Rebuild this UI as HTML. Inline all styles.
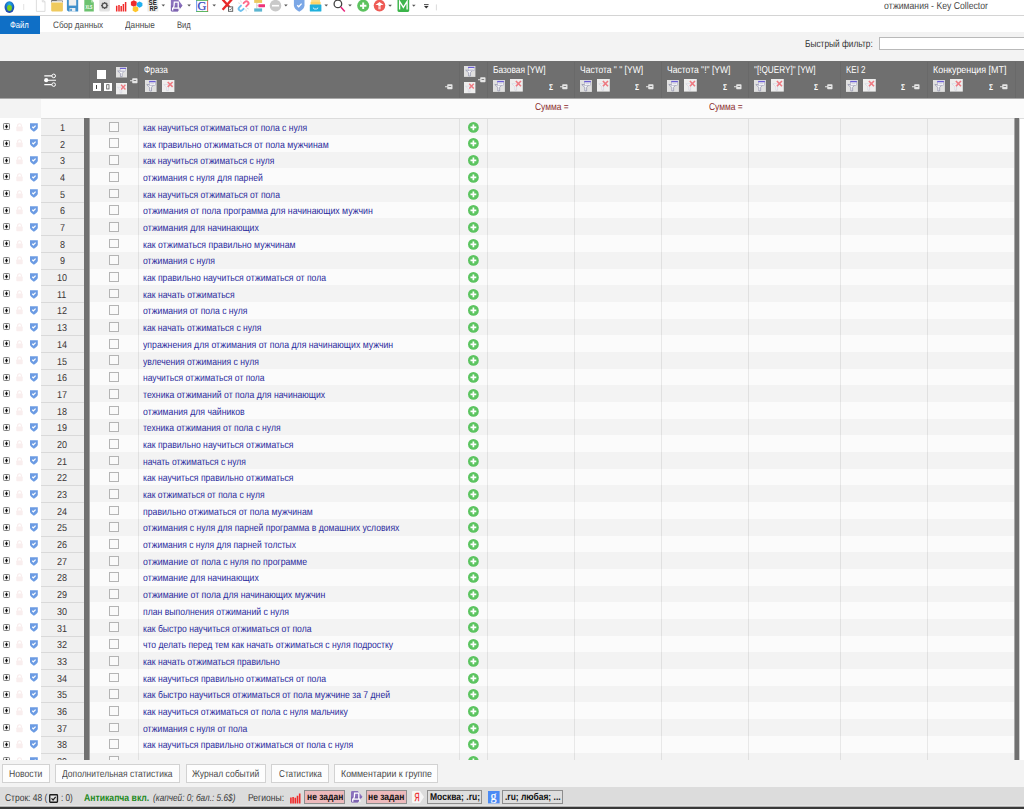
<!DOCTYPE html><html><head><meta charset="utf-8"><title>Key Collector</title><style>
*{box-sizing:border-box;margin:0;padding:0}
html,body{width:1024px;height:809px;overflow:hidden;background:#fff}
body{position:relative;font-family:"Liberation Sans",sans-serif;font-size:10px;color:#333}
.a{position:absolute}
.t{position:absolute;white-space:nowrap;transform-origin:0 50%;text-rendering:geometricPrecision}
svg{position:absolute;overflow:visible}
#title{left:0;top:0;width:1024px;height:15px;background:#fff}
#tline{left:0;top:15px;width:1024px;height:1px;background:#d4d4d4}
#menu{left:0;top:16px;width:1024px;height:16px;background:#fff}
#file{left:0;top:16px;width:40px;height:17.7px;background:#0f6fc6}
#ribbon{left:0;top:32px;width:1024px;height:29.5px;background:#f3f3f3}
#hdr{left:0;top:61px;width:1024px;height:38px;background:#6f6f6f;border-bottom:1px solid #a9a9a9}
#sum{left:0;top:99px;width:1024px;height:19px;background:#fbfbfb}
#suml{left:0;top:99px;width:41px;height:19px;background:#f3f3f3}
#grid{left:0;top:118.3px;width:1024px;height:641.4px;overflow:hidden;background:#fff}
.row{position:absolute;left:89.5px;width:925px;height:16.69px;border-top:1.3px solid transparent}
.num.first{border-top-color:#f0f0f0}
#gtop{left:41px;top:117.7px;width:983px;height:1px;background:#dcdcdc}
.odd{background:#f3f3f3}
.even{background:#fbfbfb}
.num{position:absolute;left:41px;width:43.5px;height:16.69px;background:#f0f0f0;border-top:1.3px solid #d9d9d9}
.cb{position:absolute;left:109.2px;width:9.8px;height:9.8px;border:1px solid #b4b4b4;background:#fafafa}
.vl{position:absolute;width:1px;background:rgba(0,0,0,0.075);top:117.65px;height:642.05px}
.hl{position:absolute;width:1px;background:#696969;top:62px;height:36px}
#bar1{left:84px;top:118px;width:5px;height:641.7px;background:#717171;border-right:1px solid #a4a4a4;box-sizing:content-box}
#bar2{left:1014px;top:118px;width:4px;height:641.7px;background:#717171;border-left:1px solid #a8a8a8;border-right:1px solid #cfcfcf;box-sizing:content-box}
#btnbar{left:0;top:759.8px;width:1024px;height:27.4px;background:#f3f3f3}
.btn{position:absolute;top:764.4px;height:18.2px;border:1px solid #d2d2d2;background:#fdfdfd}
#status{left:0;top:787.2px;width:1024px;height:19.3px;background:#dcdcdc}
#bline{left:0;top:807px;width:1024px;height:2px;background:#383838}
#bline0{left:0;top:805px;width:1024px;height:2px;background:#b2b2b2;border-top:1px solid #e4e4e4}
.pk{position:absolute;top:790.2px;height:13.6px;border:1px solid #8e8e8e}
</style></head><body>
<div id="title" class="a"></div><div id="tline" class="a"></div><div id="menu" class="a"></div><div id="ribbon" class="a"></div><div id="file" class="a"></div>
<div id="hdr" class="a"></div><div id="sum" class="a"></div><div id="suml" class="a"></div>
<svg width="0" height="0" style="position:absolute"><defs>
<g id="exp"><rect x="0.5" y="0.5" width="6" height="6" rx="0.8" fill="#f6f6f6" stroke="#7c7c7c" stroke-width="0.95"/><path d="M3.5 1.3 L4.9 3.5 L3.5 5.7 L2.1 3.5Z" fill="#0c0c0c"/></g>
<g id="lock"><path d="M1.6 3.8 V2.6 A1.9 1.9 0 0 1 5.4 2.6 V3.8" fill="none" stroke="#f8ecec" stroke-width="1.1"/><rect x="0.3" y="3.6" width="6.4" height="4.6" rx="0.6" fill="#f9eeee"/></g>
<g id="shield"><path d="M0 0.2 H7.8 V4.6 Q7.8 6.6 3.9 8.7 Q0 6.6 0 4.6Z" fill="#6b9be3"/><path d="M2.3 3.8 L3.4 4.9 L5.6 2.6" fill="none" stroke="#fff" stroke-width="1.25"/></g>
<g id="gplus"><circle cx="5.4" cy="5.4" r="5.4" fill="#5cc460"/><path d="M5.4 2.5 V8.3 M2.5 5.4 H8.3" stroke="#fff" stroke-width="1.7"/></g>
<g id="slider"><path d="M0.3 1.9 H8 M4 6.2 H12 M0.3 10.6 H8" stroke="#fff" stroke-width="1.1"/><circle cx="9.7" cy="1.9" r="1.8" fill="#6f6f6f" stroke="#fff" stroke-width="1"/><circle cx="2.2" cy="6.2" r="2.1" fill="#fff"/><circle cx="9.7" cy="10.6" r="1.8" fill="#6f6f6f" stroke="#fff" stroke-width="1"/></g>
<g id="f1"><rect x="0" y="0" width="11.8" height="12" fill="#e0e0e0"/><path d="M1.8 4.6 H8.8 L6.6 7.4 V11 H4.8 V7.4Z" fill="#f7f7fa" stroke="#8688a4" stroke-width="0.7"/><rect x="4.5" y="2" width="5.9" height="3.3" fill="#f5f5f9" stroke="#9c9cb4" stroke-width="0.5"/><path d="M5.4 3.7 H9.4" stroke="#a8a8bc" stroke-width="0.5"/><rect x="4.2" y="0.9" width="6.6" height="1.3" fill="#6a5cd6"/></g>
<g id="f2"><rect x="0" y="0" width="12.6" height="12.6" fill="#eeeeee"/><path d="M1.8 4.8 H8.6 L6.5 7.6 V11.2 H4.8 V7.6Z" fill="#f6f6f8" stroke="#d2d2de" stroke-width="0.7"/><path d="M5.8 2 L10.8 7.2 M10.8 2 L5.8 7.2" stroke="#ee7a82" stroke-width="1.6"/></g>
<g id="pin"><path d="M0 2.75 H2.6" stroke="#e6e6e6" stroke-width="1"/><rect x="2.2" y="0.3" width="5.3" height="4.9" rx="0.7" fill="#e6e6e6"/><rect x="3.5" y="2" width="2.7" height="0.9" fill="#7a7a7a"/></g>
<g id="chk"><rect x="0.7" y="0.7" width="7.4" height="7" rx="0.6" fill="#e2e2e2" stroke="#1c1c1c" stroke-width="1.3"/><path d="M2.4 4 L3.9 5.6 L6.4 2.6" fill="none" stroke="#1c1c1c" stroke-width="1.1"/></g>
<g id="bars"><path d="M0.9 10.4 V4.6 M3.1 10.4 V3.9 M5.3 10.4 V4.8 M7.5 10.4 V2.8 M9.7 10.4 V0.4" stroke="#f02a2a" stroke-width="1.6"/></g>
<g id="dico"><path d="M1.3 0 H6.8 L11.4 5.8 L6.8 11.6 H1.3 Q0 11.6 0 10.3 V1.3 Q0 0 1.3 0Z" fill="#8b72bd"/><path d="M0 5.8 H11.4 L6.8 11.6 H1.3 Q0 11.6 0 10.3Z" fill="#7559a8" opacity="0.55"/><path d="M1.75 10.70 V8.21 H8.85 V10.70 M7.82 8.21 V2.15 H3.62 Q3.62 6.56 2.44 8.21" fill="none" stroke="#fff" stroke-width="1.30" stroke-linejoin="miter"/></g>
<g id="yico"><path d="M1 0 H8 L12 6 L8 12 H1 Q0 12 0 11 V1 Q0 0 1 0Z" fill="#f6f6f6"/><text x="2.4" y="10" font-family="Liberation Sans" font-size="10" fill="#ee2a2a" stroke="#ee2a2a" stroke-width="0.3" textLength="5" lengthAdjust="spacingAndGlyphs">Я</text></g>
<g id="gico"><rect x="0" y="0" width="11.6" height="12.4" fill="#4a8af4"/><text x="2.6" y="8.8" font-family="Liberation Serif" font-size="12.5" fill="#fff" stroke="#fff" stroke-width="0.2" textLength="6" lengthAdjust="spacingAndGlyphs">g</text></g>
</defs></svg>

<div id="grid" class="a">
<div class="row odd" style="top:0.00px"></div>
<div class="num first" style="top:0.00px"></div>
<span class="t" style="left:59.60px;top:4.55px;font-size:10.00px;line-height:12px;color:#3a3434;transform:scaleX(0.9000);">1</span>
<div class="cb" style="top:3.50px"></div>
<span class="t" style="left:143.10px;top:4.55px;font-size:10.00px;line-height:12px;color:#2a2a9c;transform:scaleX(0.8563);">как научиться отжиматься от пола с нуля</span>
<svg style="left:2.9px;top:4.90px" width="7" height="7" viewBox="0 0 7 7"><use href="#exp"/></svg>
<svg style="left:15.5px;top:4.50px" width="7" height="8.4" viewBox="0 0 7 8.4"><use href="#lock"/></svg>
<svg style="left:29.6px;top:4.40px" width="7.8" height="8.6" viewBox="0 0 7.8 8.6"><use href="#shield"/></svg>
<svg style="left:468px;top:3.50px" width="10.8" height="10.8" viewBox="0 0 10.8 10.8"><use href="#gplus"/></svg>
<div class="row even" style="top:16.69px"></div>
<div class="num" style="top:16.69px"></div>
<span class="t" style="left:59.60px;top:21.24px;font-size:10.00px;line-height:12px;color:#3a3434;transform:scaleX(0.9000);">2</span>
<div class="cb" style="top:20.19px"></div>
<span class="t" style="left:143.10px;top:21.24px;font-size:10.00px;line-height:12px;color:#2a2a9c;transform:scaleX(0.8741);">как правильно отжиматься от пола мужчинам</span>
<svg style="left:2.9px;top:21.59px" width="7" height="7" viewBox="0 0 7 7"><use href="#exp"/></svg>
<svg style="left:15.5px;top:21.19px" width="7" height="8.4" viewBox="0 0 7 8.4"><use href="#lock"/></svg>
<svg style="left:29.6px;top:21.09px" width="7.8" height="8.6" viewBox="0 0 7.8 8.6"><use href="#shield"/></svg>
<svg style="left:468px;top:20.19px" width="10.8" height="10.8" viewBox="0 0 10.8 10.8"><use href="#gplus"/></svg>
<div class="row odd" style="top:33.38px"></div>
<div class="num" style="top:33.38px"></div>
<span class="t" style="left:59.60px;top:37.93px;font-size:10.00px;line-height:12px;color:#3a3434;transform:scaleX(0.9000);">3</span>
<div class="cb" style="top:36.88px"></div>
<span class="t" style="left:143.10px;top:37.93px;font-size:10.00px;line-height:12px;color:#2a2a9c;transform:scaleX(0.8526);">как научиться отжиматься с нуля</span>
<svg style="left:2.9px;top:38.28px" width="7" height="7" viewBox="0 0 7 7"><use href="#exp"/></svg>
<svg style="left:15.5px;top:37.88px" width="7" height="8.4" viewBox="0 0 7 8.4"><use href="#lock"/></svg>
<svg style="left:29.6px;top:37.78px" width="7.8" height="8.6" viewBox="0 0 7.8 8.6"><use href="#shield"/></svg>
<svg style="left:468px;top:36.88px" width="10.8" height="10.8" viewBox="0 0 10.8 10.8"><use href="#gplus"/></svg>
<div class="row even" style="top:50.07px"></div>
<div class="num" style="top:50.07px"></div>
<span class="t" style="left:59.60px;top:54.62px;font-size:10.00px;line-height:12px;color:#3a3434;transform:scaleX(0.9000);">4</span>
<div class="cb" style="top:53.57px"></div>
<span class="t" style="left:143.10px;top:54.62px;font-size:10.00px;line-height:12px;color:#2a2a9c;transform:scaleX(0.8584);">отжимания с нуля для парней</span>
<svg style="left:2.9px;top:54.97px" width="7" height="7" viewBox="0 0 7 7"><use href="#exp"/></svg>
<svg style="left:15.5px;top:54.57px" width="7" height="8.4" viewBox="0 0 7 8.4"><use href="#lock"/></svg>
<svg style="left:29.6px;top:54.47px" width="7.8" height="8.6" viewBox="0 0 7.8 8.6"><use href="#shield"/></svg>
<svg style="left:468px;top:53.57px" width="10.8" height="10.8" viewBox="0 0 10.8 10.8"><use href="#gplus"/></svg>
<div class="row odd" style="top:66.76px"></div>
<div class="num" style="top:66.76px"></div>
<span class="t" style="left:59.60px;top:71.31px;font-size:10.00px;line-height:12px;color:#3a3434;transform:scaleX(0.9000);">5</span>
<div class="cb" style="top:70.26px"></div>
<span class="t" style="left:143.10px;top:71.31px;font-size:10.00px;line-height:12px;color:#2a2a9c;transform:scaleX(0.8575);">как научиться отжиматься от пола</span>
<svg style="left:2.9px;top:71.66px" width="7" height="7" viewBox="0 0 7 7"><use href="#exp"/></svg>
<svg style="left:15.5px;top:71.26px" width="7" height="8.4" viewBox="0 0 7 8.4"><use href="#lock"/></svg>
<svg style="left:29.6px;top:71.16px" width="7.8" height="8.6" viewBox="0 0 7.8 8.6"><use href="#shield"/></svg>
<svg style="left:468px;top:70.26px" width="10.8" height="10.8" viewBox="0 0 10.8 10.8"><use href="#gplus"/></svg>
<div class="row even" style="top:83.45px"></div>
<div class="num" style="top:83.45px"></div>
<span class="t" style="left:59.60px;top:88.00px;font-size:10.00px;line-height:12px;color:#3a3434;transform:scaleX(0.9000);">6</span>
<div class="cb" style="top:86.95px"></div>
<span class="t" style="left:143.10px;top:88.00px;font-size:10.00px;line-height:12px;color:#2a2a9c;transform:scaleX(0.8771);">отжимания от пола программа для начинающих мужчин</span>
<svg style="left:2.9px;top:88.35px" width="7" height="7" viewBox="0 0 7 7"><use href="#exp"/></svg>
<svg style="left:15.5px;top:87.95px" width="7" height="8.4" viewBox="0 0 7 8.4"><use href="#lock"/></svg>
<svg style="left:29.6px;top:87.85px" width="7.8" height="8.6" viewBox="0 0 7.8 8.6"><use href="#shield"/></svg>
<svg style="left:468px;top:86.95px" width="10.8" height="10.8" viewBox="0 0 10.8 10.8"><use href="#gplus"/></svg>
<div class="row odd" style="top:100.14px"></div>
<div class="num" style="top:100.14px"></div>
<span class="t" style="left:59.60px;top:104.69px;font-size:10.00px;line-height:12px;color:#3a3434;transform:scaleX(0.9000);">7</span>
<div class="cb" style="top:103.64px"></div>
<span class="t" style="left:143.10px;top:104.69px;font-size:10.00px;line-height:12px;color:#2a2a9c;transform:scaleX(0.8694);">отжимания для начинающих</span>
<svg style="left:2.9px;top:105.04px" width="7" height="7" viewBox="0 0 7 7"><use href="#exp"/></svg>
<svg style="left:15.5px;top:104.64px" width="7" height="8.4" viewBox="0 0 7 8.4"><use href="#lock"/></svg>
<svg style="left:29.6px;top:104.54px" width="7.8" height="8.6" viewBox="0 0 7.8 8.6"><use href="#shield"/></svg>
<svg style="left:468px;top:103.64px" width="10.8" height="10.8" viewBox="0 0 10.8 10.8"><use href="#gplus"/></svg>
<div class="row even" style="top:116.83px"></div>
<div class="num" style="top:116.83px"></div>
<span class="t" style="left:59.60px;top:121.38px;font-size:10.00px;line-height:12px;color:#3a3434;transform:scaleX(0.9000);">8</span>
<div class="cb" style="top:120.33px"></div>
<span class="t" style="left:143.10px;top:121.38px;font-size:10.00px;line-height:12px;color:#2a2a9c;transform:scaleX(0.8723);">как отжиматься правильно мужчинам</span>
<svg style="left:2.9px;top:121.73px" width="7" height="7" viewBox="0 0 7 7"><use href="#exp"/></svg>
<svg style="left:15.5px;top:121.33px" width="7" height="8.4" viewBox="0 0 7 8.4"><use href="#lock"/></svg>
<svg style="left:29.6px;top:121.23px" width="7.8" height="8.6" viewBox="0 0 7.8 8.6"><use href="#shield"/></svg>
<svg style="left:468px;top:120.33px" width="10.8" height="10.8" viewBox="0 0 10.8 10.8"><use href="#gplus"/></svg>
<div class="row odd" style="top:133.52px"></div>
<div class="num" style="top:133.52px"></div>
<span class="t" style="left:59.60px;top:138.07px;font-size:10.00px;line-height:12px;color:#3a3434;transform:scaleX(0.9000);">9</span>
<div class="cb" style="top:137.02px"></div>
<span class="t" style="left:143.10px;top:138.07px;font-size:10.00px;line-height:12px;color:#2a2a9c;transform:scaleX(0.8613);">отжимания с нуля</span>
<svg style="left:2.9px;top:138.42px" width="7" height="7" viewBox="0 0 7 7"><use href="#exp"/></svg>
<svg style="left:15.5px;top:138.02px" width="7" height="8.4" viewBox="0 0 7 8.4"><use href="#lock"/></svg>
<svg style="left:29.6px;top:137.92px" width="7.8" height="8.6" viewBox="0 0 7.8 8.6"><use href="#shield"/></svg>
<svg style="left:468px;top:137.02px" width="10.8" height="10.8" viewBox="0 0 10.8 10.8"><use href="#gplus"/></svg>
<div class="row even" style="top:150.21px"></div>
<div class="num" style="top:150.21px"></div>
<span class="t" style="left:57.09px;top:154.76px;font-size:10.00px;line-height:12px;color:#3a3434;transform:scaleX(0.9000);">10</span>
<div class="cb" style="top:153.71px"></div>
<span class="t" style="left:143.10px;top:154.76px;font-size:10.00px;line-height:12px;color:#2a2a9c;transform:scaleX(0.8633);">как правильно научиться отжиматься от пола</span>
<svg style="left:2.9px;top:155.11px" width="7" height="7" viewBox="0 0 7 7"><use href="#exp"/></svg>
<svg style="left:15.5px;top:154.71px" width="7" height="8.4" viewBox="0 0 7 8.4"><use href="#lock"/></svg>
<svg style="left:29.6px;top:154.61px" width="7.8" height="8.6" viewBox="0 0 7.8 8.6"><use href="#shield"/></svg>
<svg style="left:468px;top:153.71px" width="10.8" height="10.8" viewBox="0 0 10.8 10.8"><use href="#gplus"/></svg>
<div class="row odd" style="top:166.90px"></div>
<div class="num" style="top:166.90px"></div>
<span class="t" style="left:57.43px;top:171.45px;font-size:10.00px;line-height:12px;color:#3a3434;transform:scaleX(0.9000);">11</span>
<div class="cb" style="top:170.40px"></div>
<span class="t" style="left:143.10px;top:171.45px;font-size:10.00px;line-height:12px;color:#2a2a9c;transform:scaleX(0.8622);">как начать отжиматься</span>
<svg style="left:2.9px;top:171.80px" width="7" height="7" viewBox="0 0 7 7"><use href="#exp"/></svg>
<svg style="left:15.5px;top:171.40px" width="7" height="8.4" viewBox="0 0 7 8.4"><use href="#lock"/></svg>
<svg style="left:29.6px;top:171.30px" width="7.8" height="8.6" viewBox="0 0 7.8 8.6"><use href="#shield"/></svg>
<svg style="left:468px;top:170.40px" width="10.8" height="10.8" viewBox="0 0 10.8 10.8"><use href="#gplus"/></svg>
<div class="row even" style="top:183.59px"></div>
<div class="num" style="top:183.59px"></div>
<span class="t" style="left:57.09px;top:188.14px;font-size:10.00px;line-height:12px;color:#3a3434;transform:scaleX(0.9000);">12</span>
<div class="cb" style="top:187.09px"></div>
<span class="t" style="left:143.10px;top:188.14px;font-size:10.00px;line-height:12px;color:#2a2a9c;transform:scaleX(0.8612);">отжимания от пола с нуля</span>
<svg style="left:2.9px;top:188.49px" width="7" height="7" viewBox="0 0 7 7"><use href="#exp"/></svg>
<svg style="left:15.5px;top:188.09px" width="7" height="8.4" viewBox="0 0 7 8.4"><use href="#lock"/></svg>
<svg style="left:29.6px;top:187.99px" width="7.8" height="8.6" viewBox="0 0 7.8 8.6"><use href="#shield"/></svg>
<svg style="left:468px;top:187.09px" width="10.8" height="10.8" viewBox="0 0 10.8 10.8"><use href="#gplus"/></svg>
<div class="row odd" style="top:200.28px"></div>
<div class="num" style="top:200.28px"></div>
<span class="t" style="left:57.09px;top:204.83px;font-size:10.00px;line-height:12px;color:#3a3434;transform:scaleX(0.9000);">13</span>
<div class="cb" style="top:203.78px"></div>
<span class="t" style="left:143.10px;top:204.83px;font-size:10.00px;line-height:12px;color:#2a2a9c;transform:scaleX(0.8565);">как начать отжиматься с нуля</span>
<svg style="left:2.9px;top:205.18px" width="7" height="7" viewBox="0 0 7 7"><use href="#exp"/></svg>
<svg style="left:15.5px;top:204.78px" width="7" height="8.4" viewBox="0 0 7 8.4"><use href="#lock"/></svg>
<svg style="left:29.6px;top:204.68px" width="7.8" height="8.6" viewBox="0 0 7.8 8.6"><use href="#shield"/></svg>
<svg style="left:468px;top:203.78px" width="10.8" height="10.8" viewBox="0 0 10.8 10.8"><use href="#gplus"/></svg>
<div class="row even" style="top:216.97px"></div>
<div class="num" style="top:216.97px"></div>
<span class="t" style="left:57.09px;top:221.52px;font-size:10.00px;line-height:12px;color:#3a3434;transform:scaleX(0.9000);">14</span>
<div class="cb" style="top:220.47px"></div>
<span class="t" style="left:143.10px;top:221.52px;font-size:10.00px;line-height:12px;color:#2a2a9c;transform:scaleX(0.8714);">упражнения для отжимания от пола для начинающих мужчин</span>
<svg style="left:2.9px;top:221.87px" width="7" height="7" viewBox="0 0 7 7"><use href="#exp"/></svg>
<svg style="left:15.5px;top:221.47px" width="7" height="8.4" viewBox="0 0 7 8.4"><use href="#lock"/></svg>
<svg style="left:29.6px;top:221.37px" width="7.8" height="8.6" viewBox="0 0 7.8 8.6"><use href="#shield"/></svg>
<svg style="left:468px;top:220.47px" width="10.8" height="10.8" viewBox="0 0 10.8 10.8"><use href="#gplus"/></svg>
<div class="row odd" style="top:233.66px"></div>
<div class="num" style="top:233.66px"></div>
<span class="t" style="left:57.09px;top:238.21px;font-size:10.00px;line-height:12px;color:#3a3434;transform:scaleX(0.9000);">15</span>
<div class="cb" style="top:237.16px"></div>
<span class="t" style="left:143.10px;top:238.21px;font-size:10.00px;line-height:12px;color:#2a2a9c;transform:scaleX(0.8589);">увлечения отжимания с нуля</span>
<svg style="left:2.9px;top:238.56px" width="7" height="7" viewBox="0 0 7 7"><use href="#exp"/></svg>
<svg style="left:15.5px;top:238.16px" width="7" height="8.4" viewBox="0 0 7 8.4"><use href="#lock"/></svg>
<svg style="left:29.6px;top:238.06px" width="7.8" height="8.6" viewBox="0 0 7.8 8.6"><use href="#shield"/></svg>
<svg style="left:468px;top:237.16px" width="10.8" height="10.8" viewBox="0 0 10.8 10.8"><use href="#gplus"/></svg>
<div class="row even" style="top:250.35px"></div>
<div class="num" style="top:250.35px"></div>
<span class="t" style="left:57.09px;top:254.90px;font-size:10.00px;line-height:12px;color:#3a3434;transform:scaleX(0.9000);">16</span>
<div class="cb" style="top:253.85px"></div>
<span class="t" style="left:143.10px;top:254.90px;font-size:10.00px;line-height:12px;color:#2a2a9c;transform:scaleX(0.8543);">научиться отжиматься от пола</span>
<svg style="left:2.9px;top:255.25px" width="7" height="7" viewBox="0 0 7 7"><use href="#exp"/></svg>
<svg style="left:15.5px;top:254.85px" width="7" height="8.4" viewBox="0 0 7 8.4"><use href="#lock"/></svg>
<svg style="left:29.6px;top:254.75px" width="7.8" height="8.6" viewBox="0 0 7.8 8.6"><use href="#shield"/></svg>
<svg style="left:468px;top:253.85px" width="10.8" height="10.8" viewBox="0 0 10.8 10.8"><use href="#gplus"/></svg>
<div class="row odd" style="top:267.04px"></div>
<div class="num" style="top:267.04px"></div>
<span class="t" style="left:57.09px;top:271.59px;font-size:10.00px;line-height:12px;color:#3a3434;transform:scaleX(0.9000);">17</span>
<div class="cb" style="top:270.54px"></div>
<span class="t" style="left:143.10px;top:271.59px;font-size:10.00px;line-height:12px;color:#2a2a9c;transform:scaleX(0.8683);">техника отжиманий от пола для начинающих</span>
<svg style="left:2.9px;top:271.94px" width="7" height="7" viewBox="0 0 7 7"><use href="#exp"/></svg>
<svg style="left:15.5px;top:271.54px" width="7" height="8.4" viewBox="0 0 7 8.4"><use href="#lock"/></svg>
<svg style="left:29.6px;top:271.44px" width="7.8" height="8.6" viewBox="0 0 7.8 8.6"><use href="#shield"/></svg>
<svg style="left:468px;top:270.54px" width="10.8" height="10.8" viewBox="0 0 10.8 10.8"><use href="#gplus"/></svg>
<div class="row even" style="top:283.73px"></div>
<div class="num" style="top:283.73px"></div>
<span class="t" style="left:57.09px;top:288.28px;font-size:10.00px;line-height:12px;color:#3a3434;transform:scaleX(0.9000);">18</span>
<div class="cb" style="top:287.23px"></div>
<span class="t" style="left:143.10px;top:288.28px;font-size:10.00px;line-height:12px;color:#2a2a9c;transform:scaleX(0.8695);">отжимания для чайников</span>
<svg style="left:2.9px;top:288.63px" width="7" height="7" viewBox="0 0 7 7"><use href="#exp"/></svg>
<svg style="left:15.5px;top:288.23px" width="7" height="8.4" viewBox="0 0 7 8.4"><use href="#lock"/></svg>
<svg style="left:29.6px;top:288.13px" width="7.8" height="8.6" viewBox="0 0 7.8 8.6"><use href="#shield"/></svg>
<svg style="left:468px;top:287.23px" width="10.8" height="10.8" viewBox="0 0 10.8 10.8"><use href="#gplus"/></svg>
<div class="row odd" style="top:300.42px"></div>
<div class="num" style="top:300.42px"></div>
<span class="t" style="left:57.09px;top:304.97px;font-size:10.00px;line-height:12px;color:#3a3434;transform:scaleX(0.9000);">19</span>
<div class="cb" style="top:303.92px"></div>
<span class="t" style="left:143.10px;top:304.97px;font-size:10.00px;line-height:12px;color:#2a2a9c;transform:scaleX(0.8599);">техника отжимания от пола с нуля</span>
<svg style="left:2.9px;top:305.32px" width="7" height="7" viewBox="0 0 7 7"><use href="#exp"/></svg>
<svg style="left:15.5px;top:304.92px" width="7" height="8.4" viewBox="0 0 7 8.4"><use href="#lock"/></svg>
<svg style="left:29.6px;top:304.82px" width="7.8" height="8.6" viewBox="0 0 7.8 8.6"><use href="#shield"/></svg>
<svg style="left:468px;top:303.92px" width="10.8" height="10.8" viewBox="0 0 10.8 10.8"><use href="#gplus"/></svg>
<div class="row even" style="top:317.11px"></div>
<div class="num" style="top:317.11px"></div>
<span class="t" style="left:57.09px;top:321.66px;font-size:10.00px;line-height:12px;color:#3a3434;transform:scaleX(0.9000);">20</span>
<div class="cb" style="top:320.61px"></div>
<span class="t" style="left:143.10px;top:321.66px;font-size:10.00px;line-height:12px;color:#2a2a9c;transform:scaleX(0.8632);">как правильно научиться отжиматься</span>
<svg style="left:2.9px;top:322.01px" width="7" height="7" viewBox="0 0 7 7"><use href="#exp"/></svg>
<svg style="left:15.5px;top:321.61px" width="7" height="8.4" viewBox="0 0 7 8.4"><use href="#lock"/></svg>
<svg style="left:29.6px;top:321.51px" width="7.8" height="8.6" viewBox="0 0 7.8 8.6"><use href="#shield"/></svg>
<svg style="left:468px;top:320.61px" width="10.8" height="10.8" viewBox="0 0 10.8 10.8"><use href="#gplus"/></svg>
<div class="row odd" style="top:333.80px"></div>
<div class="num" style="top:333.80px"></div>
<span class="t" style="left:57.09px;top:338.35px;font-size:10.00px;line-height:12px;color:#3a3434;transform:scaleX(0.9000);">21</span>
<div class="cb" style="top:337.30px"></div>
<span class="t" style="left:143.10px;top:338.35px;font-size:10.00px;line-height:12px;color:#2a2a9c;transform:scaleX(0.8501);">начать отжиматься с нуля</span>
<svg style="left:2.9px;top:338.70px" width="7" height="7" viewBox="0 0 7 7"><use href="#exp"/></svg>
<svg style="left:15.5px;top:338.30px" width="7" height="8.4" viewBox="0 0 7 8.4"><use href="#lock"/></svg>
<svg style="left:29.6px;top:338.20px" width="7.8" height="8.6" viewBox="0 0 7.8 8.6"><use href="#shield"/></svg>
<svg style="left:468px;top:337.30px" width="10.8" height="10.8" viewBox="0 0 10.8 10.8"><use href="#gplus"/></svg>
<div class="row even" style="top:350.49px"></div>
<div class="num" style="top:350.49px"></div>
<span class="t" style="left:57.09px;top:355.04px;font-size:10.00px;line-height:12px;color:#3a3434;transform:scaleX(0.9000);">22</span>
<div class="cb" style="top:353.99px"></div>
<span class="t" style="left:143.10px;top:355.04px;font-size:10.00px;line-height:12px;color:#2a2a9c;transform:scaleX(0.8632);">как научиться правильно отжиматься</span>
<svg style="left:2.9px;top:355.39px" width="7" height="7" viewBox="0 0 7 7"><use href="#exp"/></svg>
<svg style="left:15.5px;top:354.99px" width="7" height="8.4" viewBox="0 0 7 8.4"><use href="#lock"/></svg>
<svg style="left:29.6px;top:354.89px" width="7.8" height="8.6" viewBox="0 0 7.8 8.6"><use href="#shield"/></svg>
<svg style="left:468px;top:353.99px" width="10.8" height="10.8" viewBox="0 0 10.8 10.8"><use href="#gplus"/></svg>
<div class="row odd" style="top:367.18px"></div>
<div class="num" style="top:367.18px"></div>
<span class="t" style="left:57.09px;top:371.73px;font-size:10.00px;line-height:12px;color:#3a3434;transform:scaleX(0.9000);">23</span>
<div class="cb" style="top:370.68px"></div>
<span class="t" style="left:143.10px;top:371.73px;font-size:10.00px;line-height:12px;color:#2a2a9c;transform:scaleX(0.8563);">как отжиматься от пола с нуля</span>
<svg style="left:2.9px;top:372.08px" width="7" height="7" viewBox="0 0 7 7"><use href="#exp"/></svg>
<svg style="left:15.5px;top:371.68px" width="7" height="8.4" viewBox="0 0 7 8.4"><use href="#lock"/></svg>
<svg style="left:29.6px;top:371.58px" width="7.8" height="8.6" viewBox="0 0 7.8 8.6"><use href="#shield"/></svg>
<svg style="left:468px;top:370.68px" width="10.8" height="10.8" viewBox="0 0 10.8 10.8"><use href="#gplus"/></svg>
<div class="row even" style="top:383.87px"></div>
<div class="num" style="top:383.87px"></div>
<span class="t" style="left:57.09px;top:388.42px;font-size:10.00px;line-height:12px;color:#3a3434;transform:scaleX(0.9000);">24</span>
<div class="cb" style="top:387.37px"></div>
<span class="t" style="left:143.10px;top:388.42px;font-size:10.00px;line-height:12px;color:#2a2a9c;transform:scaleX(0.8696);">правильно отжиматься от пола мужчинам</span>
<svg style="left:2.9px;top:388.77px" width="7" height="7" viewBox="0 0 7 7"><use href="#exp"/></svg>
<svg style="left:15.5px;top:388.37px" width="7" height="8.4" viewBox="0 0 7 8.4"><use href="#lock"/></svg>
<svg style="left:29.6px;top:388.27px" width="7.8" height="8.6" viewBox="0 0 7.8 8.6"><use href="#shield"/></svg>
<svg style="left:468px;top:387.37px" width="10.8" height="10.8" viewBox="0 0 10.8 10.8"><use href="#gplus"/></svg>
<div class="row odd" style="top:400.56px"></div>
<div class="num" style="top:400.56px"></div>
<span class="t" style="left:57.09px;top:405.11px;font-size:10.00px;line-height:12px;color:#3a3434;transform:scaleX(0.9000);">25</span>
<div class="cb" style="top:404.06px"></div>
<span class="t" style="left:143.10px;top:405.11px;font-size:10.00px;line-height:12px;color:#2a2a9c;transform:scaleX(0.8628);">отжимания с нуля для парней программа в домашних условиях</span>
<svg style="left:2.9px;top:405.46px" width="7" height="7" viewBox="0 0 7 7"><use href="#exp"/></svg>
<svg style="left:15.5px;top:405.06px" width="7" height="8.4" viewBox="0 0 7 8.4"><use href="#lock"/></svg>
<svg style="left:29.6px;top:404.96px" width="7.8" height="8.6" viewBox="0 0 7.8 8.6"><use href="#shield"/></svg>
<svg style="left:468px;top:404.06px" width="10.8" height="10.8" viewBox="0 0 10.8 10.8"><use href="#gplus"/></svg>
<div class="row even" style="top:417.25px"></div>
<div class="num" style="top:417.25px"></div>
<span class="t" style="left:57.09px;top:421.80px;font-size:10.00px;line-height:12px;color:#3a3434;transform:scaleX(0.9000);">26</span>
<div class="cb" style="top:420.75px"></div>
<span class="t" style="left:143.10px;top:421.80px;font-size:10.00px;line-height:12px;color:#2a2a9c;transform:scaleX(0.8512);">отжимания с нуля для парней толстых</span>
<svg style="left:2.9px;top:422.15px" width="7" height="7" viewBox="0 0 7 7"><use href="#exp"/></svg>
<svg style="left:15.5px;top:421.75px" width="7" height="8.4" viewBox="0 0 7 8.4"><use href="#lock"/></svg>
<svg style="left:29.6px;top:421.65px" width="7.8" height="8.6" viewBox="0 0 7.8 8.6"><use href="#shield"/></svg>
<svg style="left:468px;top:420.75px" width="10.8" height="10.8" viewBox="0 0 10.8 10.8"><use href="#gplus"/></svg>
<div class="row odd" style="top:433.94px"></div>
<div class="num" style="top:433.94px"></div>
<span class="t" style="left:57.09px;top:438.49px;font-size:10.00px;line-height:12px;color:#3a3434;transform:scaleX(0.9000);">27</span>
<div class="cb" style="top:437.44px"></div>
<span class="t" style="left:143.10px;top:438.49px;font-size:10.00px;line-height:12px;color:#2a2a9c;transform:scaleX(0.8709);">отжимание от пола с нуля по программе</span>
<svg style="left:2.9px;top:438.84px" width="7" height="7" viewBox="0 0 7 7"><use href="#exp"/></svg>
<svg style="left:15.5px;top:438.44px" width="7" height="8.4" viewBox="0 0 7 8.4"><use href="#lock"/></svg>
<svg style="left:29.6px;top:438.34px" width="7.8" height="8.6" viewBox="0 0 7.8 8.6"><use href="#shield"/></svg>
<svg style="left:468px;top:437.44px" width="10.8" height="10.8" viewBox="0 0 10.8 10.8"><use href="#gplus"/></svg>
<div class="row even" style="top:450.63px"></div>
<div class="num" style="top:450.63px"></div>
<span class="t" style="left:57.09px;top:455.18px;font-size:10.00px;line-height:12px;color:#3a3434;transform:scaleX(0.9000);">28</span>
<div class="cb" style="top:454.13px"></div>
<span class="t" style="left:143.10px;top:455.18px;font-size:10.00px;line-height:12px;color:#2a2a9c;transform:scaleX(0.8685);">отжимание для начинающих</span>
<svg style="left:2.9px;top:455.53px" width="7" height="7" viewBox="0 0 7 7"><use href="#exp"/></svg>
<svg style="left:15.5px;top:455.13px" width="7" height="8.4" viewBox="0 0 7 8.4"><use href="#lock"/></svg>
<svg style="left:29.6px;top:455.03px" width="7.8" height="8.6" viewBox="0 0 7.8 8.6"><use href="#shield"/></svg>
<svg style="left:468px;top:454.13px" width="10.8" height="10.8" viewBox="0 0 10.8 10.8"><use href="#gplus"/></svg>
<div class="row odd" style="top:467.32px"></div>
<div class="num" style="top:467.32px"></div>
<span class="t" style="left:57.09px;top:471.87px;font-size:10.00px;line-height:12px;color:#3a3434;transform:scaleX(0.9000);">29</span>
<div class="cb" style="top:470.82px"></div>
<span class="t" style="left:143.10px;top:471.87px;font-size:10.00px;line-height:12px;color:#2a2a9c;transform:scaleX(0.8729);">отжимание от пола для начинающих мужчин</span>
<svg style="left:2.9px;top:472.22px" width="7" height="7" viewBox="0 0 7 7"><use href="#exp"/></svg>
<svg style="left:15.5px;top:471.82px" width="7" height="8.4" viewBox="0 0 7 8.4"><use href="#lock"/></svg>
<svg style="left:29.6px;top:471.72px" width="7.8" height="8.6" viewBox="0 0 7.8 8.6"><use href="#shield"/></svg>
<svg style="left:468px;top:470.82px" width="10.8" height="10.8" viewBox="0 0 10.8 10.8"><use href="#gplus"/></svg>
<div class="row even" style="top:484.01px"></div>
<div class="num" style="top:484.01px"></div>
<span class="t" style="left:57.09px;top:488.56px;font-size:10.00px;line-height:12px;color:#3a3434;transform:scaleX(0.9000);">30</span>
<div class="cb" style="top:487.51px"></div>
<span class="t" style="left:143.10px;top:488.56px;font-size:10.00px;line-height:12px;color:#2a2a9c;transform:scaleX(0.8666);">план выполнения отжиманий с нуля</span>
<svg style="left:2.9px;top:488.91px" width="7" height="7" viewBox="0 0 7 7"><use href="#exp"/></svg>
<svg style="left:15.5px;top:488.51px" width="7" height="8.4" viewBox="0 0 7 8.4"><use href="#lock"/></svg>
<svg style="left:29.6px;top:488.41px" width="7.8" height="8.6" viewBox="0 0 7.8 8.6"><use href="#shield"/></svg>
<svg style="left:468px;top:487.51px" width="10.8" height="10.8" viewBox="0 0 10.8 10.8"><use href="#gplus"/></svg>
<div class="row odd" style="top:500.70px"></div>
<div class="num" style="top:500.70px"></div>
<span class="t" style="left:57.09px;top:505.25px;font-size:10.00px;line-height:12px;color:#3a3434;transform:scaleX(0.9000);">31</span>
<div class="cb" style="top:504.20px"></div>
<span class="t" style="left:143.10px;top:505.25px;font-size:10.00px;line-height:12px;color:#2a2a9c;transform:scaleX(0.8595);">как быстро научиться отжиматься от пола</span>
<svg style="left:2.9px;top:505.60px" width="7" height="7" viewBox="0 0 7 7"><use href="#exp"/></svg>
<svg style="left:15.5px;top:505.20px" width="7" height="8.4" viewBox="0 0 7 8.4"><use href="#lock"/></svg>
<svg style="left:29.6px;top:505.10px" width="7.8" height="8.6" viewBox="0 0 7.8 8.6"><use href="#shield"/></svg>
<svg style="left:468px;top:504.20px" width="10.8" height="10.8" viewBox="0 0 10.8 10.8"><use href="#gplus"/></svg>
<div class="row even" style="top:517.39px"></div>
<div class="num" style="top:517.39px"></div>
<span class="t" style="left:57.09px;top:521.94px;font-size:10.00px;line-height:12px;color:#3a3434;transform:scaleX(0.9000);">32</span>
<div class="cb" style="top:520.89px"></div>
<span class="t" style="left:143.10px;top:521.94px;font-size:10.00px;line-height:12px;color:#2a2a9c;transform:scaleX(0.8599);">что делать перед тем как начать отжиматься с нуля подростку</span>
<svg style="left:2.9px;top:522.29px" width="7" height="7" viewBox="0 0 7 7"><use href="#exp"/></svg>
<svg style="left:15.5px;top:521.89px" width="7" height="8.4" viewBox="0 0 7 8.4"><use href="#lock"/></svg>
<svg style="left:29.6px;top:521.79px" width="7.8" height="8.6" viewBox="0 0 7.8 8.6"><use href="#shield"/></svg>
<svg style="left:468px;top:520.89px" width="10.8" height="10.8" viewBox="0 0 10.8 10.8"><use href="#gplus"/></svg>
<div class="row odd" style="top:534.08px"></div>
<div class="num" style="top:534.08px"></div>
<span class="t" style="left:57.09px;top:538.63px;font-size:10.00px;line-height:12px;color:#3a3434;transform:scaleX(0.9000);">33</span>
<div class="cb" style="top:537.58px"></div>
<span class="t" style="left:143.10px;top:538.63px;font-size:10.00px;line-height:12px;color:#2a2a9c;transform:scaleX(0.8632);">как начать отжиматься правильно</span>
<svg style="left:2.9px;top:538.98px" width="7" height="7" viewBox="0 0 7 7"><use href="#exp"/></svg>
<svg style="left:15.5px;top:538.58px" width="7" height="8.4" viewBox="0 0 7 8.4"><use href="#lock"/></svg>
<svg style="left:29.6px;top:538.48px" width="7.8" height="8.6" viewBox="0 0 7.8 8.6"><use href="#shield"/></svg>
<svg style="left:468px;top:537.58px" width="10.8" height="10.8" viewBox="0 0 10.8 10.8"><use href="#gplus"/></svg>
<div class="row even" style="top:550.77px"></div>
<div class="num" style="top:550.77px"></div>
<span class="t" style="left:57.09px;top:555.32px;font-size:10.00px;line-height:12px;color:#3a3434;transform:scaleX(0.9000);">34</span>
<div class="cb" style="top:554.27px"></div>
<span class="t" style="left:143.10px;top:555.32px;font-size:10.00px;line-height:12px;color:#2a2a9c;transform:scaleX(0.8633);">как научиться правильно отжиматься от пола</span>
<svg style="left:2.9px;top:555.67px" width="7" height="7" viewBox="0 0 7 7"><use href="#exp"/></svg>
<svg style="left:15.5px;top:555.27px" width="7" height="8.4" viewBox="0 0 7 8.4"><use href="#lock"/></svg>
<svg style="left:29.6px;top:555.17px" width="7.8" height="8.6" viewBox="0 0 7.8 8.6"><use href="#shield"/></svg>
<svg style="left:468px;top:554.27px" width="10.8" height="10.8" viewBox="0 0 10.8 10.8"><use href="#gplus"/></svg>
<div class="row odd" style="top:567.46px"></div>
<div class="num" style="top:567.46px"></div>
<span class="t" style="left:57.09px;top:572.01px;font-size:10.00px;line-height:12px;color:#3a3434;transform:scaleX(0.9000);">35</span>
<div class="cb" style="top:570.96px"></div>
<span class="t" style="left:143.10px;top:572.01px;font-size:10.00px;line-height:12px;color:#2a2a9c;transform:scaleX(0.8639);">как быстро научиться отжиматься от пола мужчине за 7 дней</span>
<svg style="left:2.9px;top:572.36px" width="7" height="7" viewBox="0 0 7 7"><use href="#exp"/></svg>
<svg style="left:15.5px;top:571.96px" width="7" height="8.4" viewBox="0 0 7 8.4"><use href="#lock"/></svg>
<svg style="left:29.6px;top:571.86px" width="7.8" height="8.6" viewBox="0 0 7.8 8.6"><use href="#shield"/></svg>
<svg style="left:468px;top:570.96px" width="10.8" height="10.8" viewBox="0 0 10.8 10.8"><use href="#gplus"/></svg>
<div class="row even" style="top:584.15px"></div>
<div class="num" style="top:584.15px"></div>
<span class="t" style="left:57.09px;top:588.70px;font-size:10.00px;line-height:12px;color:#3a3434;transform:scaleX(0.9000);">36</span>
<div class="cb" style="top:587.65px"></div>
<span class="t" style="left:143.10px;top:588.70px;font-size:10.00px;line-height:12px;color:#2a2a9c;transform:scaleX(0.8619);">как научиться отжиматься от пола с нуля мальчику</span>
<svg style="left:2.9px;top:589.05px" width="7" height="7" viewBox="0 0 7 7"><use href="#exp"/></svg>
<svg style="left:15.5px;top:588.65px" width="7" height="8.4" viewBox="0 0 7 8.4"><use href="#lock"/></svg>
<svg style="left:29.6px;top:588.55px" width="7.8" height="8.6" viewBox="0 0 7.8 8.6"><use href="#shield"/></svg>
<svg style="left:468px;top:587.65px" width="10.8" height="10.8" viewBox="0 0 10.8 10.8"><use href="#gplus"/></svg>
<div class="row odd" style="top:600.84px"></div>
<div class="num" style="top:600.84px"></div>
<span class="t" style="left:57.09px;top:605.39px;font-size:10.00px;line-height:12px;color:#3a3434;transform:scaleX(0.9000);">37</span>
<div class="cb" style="top:604.34px"></div>
<span class="t" style="left:143.10px;top:605.39px;font-size:10.00px;line-height:12px;color:#2a2a9c;transform:scaleX(0.8612);">отжимания с нуля от пола</span>
<svg style="left:2.9px;top:605.74px" width="7" height="7" viewBox="0 0 7 7"><use href="#exp"/></svg>
<svg style="left:15.5px;top:605.34px" width="7" height="8.4" viewBox="0 0 7 8.4"><use href="#lock"/></svg>
<svg style="left:29.6px;top:605.24px" width="7.8" height="8.6" viewBox="0 0 7.8 8.6"><use href="#shield"/></svg>
<svg style="left:468px;top:604.34px" width="10.8" height="10.8" viewBox="0 0 10.8 10.8"><use href="#gplus"/></svg>
<div class="row even" style="top:617.53px"></div>
<div class="num" style="top:617.53px"></div>
<span class="t" style="left:57.09px;top:622.08px;font-size:10.00px;line-height:12px;color:#3a3434;transform:scaleX(0.9000);">38</span>
<div class="cb" style="top:621.03px"></div>
<span class="t" style="left:143.10px;top:622.08px;font-size:10.00px;line-height:12px;color:#2a2a9c;transform:scaleX(0.8615);">как научиться правильно отжиматься от пола с нуля</span>
<svg style="left:2.9px;top:622.43px" width="7" height="7" viewBox="0 0 7 7"><use href="#exp"/></svg>
<svg style="left:15.5px;top:622.03px" width="7" height="8.4" viewBox="0 0 7 8.4"><use href="#lock"/></svg>
<svg style="left:29.6px;top:621.93px" width="7.8" height="8.6" viewBox="0 0 7.8 8.6"><use href="#shield"/></svg>
<svg style="left:468px;top:621.03px" width="10.8" height="10.8" viewBox="0 0 10.8 10.8"><use href="#gplus"/></svg>
<div class="row odd" style="top:634.22px"></div>
<div class="num" style="top:634.22px"></div>
<span class="t" style="left:57.09px;top:638.77px;font-size:10.00px;line-height:12px;color:#3a3434;transform:scaleX(0.9000);">39</span>
<div class="cb" style="top:637.72px"></div>
<svg style="left:2.9px;top:639.12px" width="7" height="7" viewBox="0 0 7 7"><use href="#exp"/></svg>
<svg style="left:15.5px;top:638.72px" width="7" height="8.4" viewBox="0 0 7 8.4"><use href="#lock"/></svg>
<svg style="left:29.6px;top:638.62px" width="7.8" height="8.6" viewBox="0 0 7.8 8.6"><use href="#shield"/></svg>
<svg style="left:468px;top:637.72px" width="10.8" height="10.8" viewBox="0 0 10.8 10.8"><use href="#gplus"/></svg>
</div>
<div class="vl" style="left:137.9px"></div>
<div class="hl" style="left:137.9px"></div>
<div class="vl" style="left:458.7px"></div>
<div class="hl" style="left:458.7px"></div>
<div class="vl" style="left:487.4px"></div>
<div class="hl" style="left:487.4px"></div>
<div class="vl" style="left:574.2px"></div>
<div class="hl" style="left:574.2px"></div>
<div class="vl" style="left:660.5px"></div>
<div class="hl" style="left:660.5px"></div>
<div class="vl" style="left:748.2px"></div>
<div class="hl" style="left:748.2px"></div>
<div class="vl" style="left:839.5px"></div>
<div class="hl" style="left:839.5px"></div>
<div class="vl" style="left:926.6px"></div>
<div class="hl" style="left:926.6px"></div>
<div class="hl" style="left:89px"></div><div class="hl" style="left:1014.5px"></div>
<div id="gtop" class="a"></div>
<div id="bar1" class="a"></div><div id="bar2" class="a"></div>

<svg style="left:44.00px;top:73.80px" width="12.20" height="13.00" viewBox="0 0 12.20 13.00" preserveAspectRatio="none"><use href="#slider"/></svg>
<div class="a" style="left:97px;top:70.1px;width:8.8px;height:8.8px;background:#fff"></div>
<div class="a" style="left:93px;top:83px;width:7.6px;height:7.7px;background:#fff"></div><div class="a" style="left:96.2px;top:84.6px;width:1.3px;height:4.6px;background:#444"></div>
<div class="a" style="left:104.1px;top:83px;width:7.7px;height:7.7px;background:#fff"></div><svg style="left:104.1px;top:83px" width="7.7" height="7.7" viewBox="0 0 7.7 7.7"><rect x="2.7" y="1.7" width="2.3" height="4.3" fill="none" stroke="#555" stroke-width="0.8"/></svg>
<svg style="left:116.00px;top:66.60px" width="11.00" height="10.50" viewBox="0 0 11.80 12.00" preserveAspectRatio="none"><use href="#f1"/></svg>
<svg style="left:116.00px;top:82.60px" width="11.00" height="11.30" viewBox="0 0 12.60 12.60" preserveAspectRatio="none"><use href="#f2"/></svg>
<svg style="left:130.20px;top:77.60px" width="8.00" height="5.50" viewBox="0 0 8.00 5.50" preserveAspectRatio="none"><use href="#pin"/></svg>
<span class="t" style="left:144.40px;top:64.90px;font-size:10.00px;line-height:12px;color:#fff;transform:scaleX(0.8275);">Фраза</span>
<svg style="left:144.80px;top:79.80px" width="11.60" height="12.00" viewBox="0 0 11.80 12.00" preserveAspectRatio="none"><use href="#f1"/></svg>
<svg style="left:161.70px;top:79.80px" width="12.40" height="12.00" viewBox="0 0 12.60 12.60" preserveAspectRatio="none"><use href="#f2"/></svg>
<svg style="left:444.90px;top:84.20px" width="8.00" height="5.50" viewBox="0 0 8.00 5.50" preserveAspectRatio="none"><use href="#pin"/></svg>
<svg style="left:463.80px;top:66.40px" width="11.40" height="10.90" viewBox="0 0 11.80 12.00" preserveAspectRatio="none"><use href="#f1"/></svg>
<svg style="left:463.80px;top:82.40px" width="11.40" height="11.20" viewBox="0 0 12.60 12.60" preserveAspectRatio="none"><use href="#f2"/></svg>
<svg style="left:478.20px;top:77.30px" width="8.00" height="5.50" viewBox="0 0 8.00 5.50" preserveAspectRatio="none"><use href="#pin"/></svg>
<span class="t" style="left:493.00px;top:64.90px;font-size:10.00px;line-height:12px;color:#fff;transform:scaleX(0.8378);">Базовая [YW]</span>
<svg style="left:493.00px;top:79.90px" width="11.90" height="11.90" viewBox="0 0 11.80 12.00" preserveAspectRatio="none"><use href="#f1"/></svg>
<svg style="left:510.00px;top:79.40px" width="12.80" height="12.60" viewBox="0 0 12.60 12.60" preserveAspectRatio="none"><use href="#f2"/></svg>
<span class="t" style="left:548.80px;top:83.10px;font-size:8.20px;line-height:10px;color:#fff;transform:scaleX(0.8200);font-weight:bold;">Σ</span>
<svg style="left:559.90px;top:84.20px" width="8.00" height="5.50" viewBox="0 0 8.00 5.50" preserveAspectRatio="none"><use href="#pin"/></svg>
<span class="t" style="left:579.80px;top:64.90px;font-size:10.00px;line-height:12px;color:#fff;transform:scaleX(0.8495);">Частота &quot; &quot; [YW]</span>
<svg style="left:579.80px;top:79.90px" width="11.90" height="11.90" viewBox="0 0 11.80 12.00" preserveAspectRatio="none"><use href="#f1"/></svg>
<svg style="left:596.80px;top:79.40px" width="12.80" height="12.60" viewBox="0 0 12.60 12.60" preserveAspectRatio="none"><use href="#f2"/></svg>
<span class="t" style="left:635.10px;top:83.10px;font-size:8.20px;line-height:10px;color:#fff;transform:scaleX(0.8200);font-weight:bold;">Σ</span>
<svg style="left:646.20px;top:84.20px" width="8.00" height="5.50" viewBox="0 0 8.00 5.50" preserveAspectRatio="none"><use href="#pin"/></svg>
<span class="t" style="left:667.40px;top:64.90px;font-size:10.00px;line-height:12px;color:#fff;transform:scaleX(0.8562);">Частота &quot;!&quot; [YW]</span>
<svg style="left:667.20px;top:79.90px" width="11.90" height="11.90" viewBox="0 0 11.80 12.00" preserveAspectRatio="none"><use href="#f1"/></svg>
<svg style="left:684.20px;top:79.40px" width="12.80" height="12.60" viewBox="0 0 12.60 12.60" preserveAspectRatio="none"><use href="#f2"/></svg>
<span class="t" style="left:722.80px;top:83.10px;font-size:8.20px;line-height:10px;color:#fff;transform:scaleX(0.8200);font-weight:bold;">Σ</span>
<svg style="left:733.90px;top:84.20px" width="8.00" height="5.50" viewBox="0 0 8.00 5.50" preserveAspectRatio="none"><use href="#pin"/></svg>
<span class="t" style="left:754.10px;top:64.90px;font-size:10.00px;line-height:12px;color:#fff;transform:scaleX(0.8185);">&quot;[!QUERY]&quot; [YW]</span>
<svg style="left:754.30px;top:79.90px" width="11.90" height="11.90" viewBox="0 0 11.80 12.00" preserveAspectRatio="none"><use href="#f1"/></svg>
<svg style="left:771.30px;top:79.40px" width="12.80" height="12.60" viewBox="0 0 12.60 12.60" preserveAspectRatio="none"><use href="#f2"/></svg>
<span class="t" style="left:814.10px;top:83.10px;font-size:8.20px;line-height:10px;color:#fff;transform:scaleX(0.8200);font-weight:bold;">Σ</span>
<svg style="left:825.20px;top:84.20px" width="8.00" height="5.50" viewBox="0 0 8.00 5.50" preserveAspectRatio="none"><use href="#pin"/></svg>
<span class="t" style="left:845.60px;top:64.90px;font-size:10.00px;line-height:12px;color:#fff;transform:scaleX(0.8000);">KEI 2</span>
<svg style="left:846.00px;top:79.90px" width="11.90" height="11.90" viewBox="0 0 11.80 12.00" preserveAspectRatio="none"><use href="#f1"/></svg>
<svg style="left:863.00px;top:79.40px" width="12.80" height="12.60" viewBox="0 0 12.60 12.60" preserveAspectRatio="none"><use href="#f2"/></svg>
<span class="t" style="left:901.20px;top:83.10px;font-size:8.20px;line-height:10px;color:#fff;transform:scaleX(0.8200);font-weight:bold;">Σ</span>
<svg style="left:912.30px;top:84.20px" width="8.00" height="5.50" viewBox="0 0 8.00 5.50" preserveAspectRatio="none"><use href="#pin"/></svg>
<span class="t" style="left:933.00px;top:64.90px;font-size:10.00px;line-height:12px;color:#fff;transform:scaleX(0.8904);">Конкуренция [MT]</span>
<svg style="left:933.30px;top:79.90px" width="11.90" height="11.90" viewBox="0 0 11.80 12.00" preserveAspectRatio="none"><use href="#f1"/></svg>
<svg style="left:950.30px;top:79.40px" width="12.80" height="12.60" viewBox="0 0 12.60 12.60" preserveAspectRatio="none"><use href="#f2"/></svg>
<span class="t" style="left:988.60px;top:83.10px;font-size:8.20px;line-height:10px;color:#fff;transform:scaleX(0.8200);font-weight:bold;">Σ</span>
<svg style="left:999.70px;top:84.20px" width="8.00" height="5.50" viewBox="0 0 8.00 5.50" preserveAspectRatio="none"><use href="#pin"/></svg>
<span class="t" style="left:534.60px;top:101.70px;font-size:10.00px;line-height:12px;color:#8a2c2c;transform:scaleX(0.8442);">Сумма =</span>
<span class="t" style="left:708.90px;top:101.70px;font-size:10.00px;line-height:12px;color:#8a2c2c;transform:scaleX(0.8442);">Сумма =</span>
<div id="btnbar" class="a"></div><div id="status" class="a"></div><div id="bline0" class="a"></div><div id="bline" class="a"></div>
<div class="btn" style="left:2.0px;width:47.8px"></div>
<span class="t" style="left:8.90px;top:768.60px;font-size:10.00px;line-height:12px;color:#4a4a4a;transform:scaleX(0.8628);">Новости</span>
<div class="btn" style="left:54.5px;width:125.0px"></div>
<span class="t" style="left:61.50px;top:768.60px;font-size:10.00px;line-height:12px;color:#4a4a4a;transform:scaleX(0.8470);">Дополнительная статистика</span>
<div class="btn" style="left:185.6px;width:80.7px"></div>
<span class="t" style="left:191.80px;top:768.60px;font-size:10.00px;line-height:12px;color:#4a4a4a;transform:scaleX(0.8549);">Журнал событий</span>
<div class="btn" style="left:271.4px;width:57.2px"></div>
<span class="t" style="left:278.50px;top:768.60px;font-size:10.00px;line-height:12px;color:#4a4a4a;transform:scaleX(0.8149);">Статистика</span>
<div class="btn" style="left:333.6px;width:104.2px"></div>
<span class="t" style="left:340.60px;top:768.60px;font-size:10.00px;line-height:12px;color:#4a4a4a;transform:scaleX(0.8800);">Комментарии к группе</span>
<span class="t" style="left:5.00px;top:792.90px;font-size:10.00px;line-height:12px;color:#3a3a3a;transform:scaleX(0.8465);">Строк: 48 (</span>
<svg style="left:49.40px;top:794.00px" width="9.20" height="9.00" viewBox="0 0 8.80 8.40" preserveAspectRatio="none"><use href="#chk"/></svg>
<span class="t" style="left:60.50px;top:792.90px;font-size:10.00px;line-height:12px;color:#3a3a3a;transform:scaleX(0.8167);">: 0)</span>
<span class="t" style="left:83.60px;top:792.90px;font-size:10.00px;line-height:12px;color:#1c8a1c;transform:scaleX(0.8640);font-weight:bold;">Антикапча вкл.</span>
<span class="t" style="left:153.40px;top:792.90px;font-size:10.00px;line-height:12px;color:#3a3a3a;transform:scaleX(0.8255);font-style:italic;">(капчей: 0; бал.: 5.6$)</span>
<span class="t" style="left:248.00px;top:792.90px;font-size:10.00px;line-height:12px;color:#3a3a3a;transform:scaleX(0.8580);">Регионы:</span>
<svg style="left:289.90px;top:792.60px" width="10.80" height="10.50" viewBox="0 0 10.80 10.50" preserveAspectRatio="none"><use href="#bars"/></svg>
<div class="pk" style="left:304px;width:41.2px;background:#ecb9bb"></div>
<span class="t" style="left:306.60px;top:791.70px;font-size:10.00px;line-height:12px;color:#111;transform:scaleX(0.8519);font-weight:bold;">не задан</span>
<svg style="left:351.00px;top:791.30px" width="11.40" height="11.60" viewBox="0 0 11.40 11.60" preserveAspectRatio="none"><use href="#dico"/></svg>
<div class="pk" style="left:365.5px;width:41.2px;background:#ecb9bb"></div>
<span class="t" style="left:368.30px;top:791.70px;font-size:10.00px;line-height:12px;color:#111;transform:scaleX(0.8519);font-weight:bold;">не задан</span>
<svg style="left:412.40px;top:791.40px" width="12.00" height="12.00" viewBox="0 0 12.00 12.00" preserveAspectRatio="none"><use href="#yico"/></svg>
<div class="pk" style="left:427.2px;width:54.6px;background:#dedede"></div>
<span class="t" style="left:429.70px;top:791.70px;font-size:10.00px;line-height:12px;color:#111;transform:scaleX(0.8523);font-weight:bold;">Москва; .ru;</span>
<svg style="left:488.00px;top:791.20px" width="11.60" height="12.40" viewBox="0 0 11.60 12.40" preserveAspectRatio="none"><use href="#gico"/></svg>
<div class="pk" style="left:502px;width:60.6px;background:#dedede"></div>
<span class="t" style="left:504.60px;top:791.70px;font-size:10.00px;line-height:12px;color:#111;transform:scaleX(0.8467);font-weight:bold;">.ru; любая; ...</span>
<span class="t" style="left:883.50px;top:1.00px;font-size:10.00px;line-height:12px;color:#484848;transform:scaleX(0.8678);">отжимания - Key Collector</span>
<span class="t" style="left:10.30px;top:19.30px;font-size:9.40px;line-height:11px;color:#fff;transform:scaleX(0.8135);">Файл</span>
<span class="t" style="left:52.60px;top:19.30px;font-size:9.40px;line-height:11px;color:#4a4a4a;transform:scaleX(0.8686);">Сбор данных</span>
<span class="t" style="left:124.50px;top:19.30px;font-size:9.40px;line-height:11px;color:#4a4a4a;transform:scaleX(0.8775);">Данные</span>
<span class="t" style="left:176.50px;top:19.30px;font-size:9.40px;line-height:11px;color:#4a4a4a;transform:scaleX(0.8115);">Вид</span>
<span class="t" style="left:804.80px;top:38.90px;font-size:10.00px;line-height:12px;color:#333;transform:scaleX(0.8325);">Быстрый фильтр:</span>
<div class="a" style="left:879.3px;top:37.2px;width:150px;height:12.4px;border:1px solid #b9b9b9;background:#fff"></div>
<svg style="left:0;top:0" width="440" height="15" viewBox="0 0 440 15">
<defs>
<radialGradient id="eg" cx="0.5" cy="0.3" r="0.8"><stop offset="0" stop-color="#1fb4e8"/><stop offset="0.55" stop-color="#1a5fc0"/><stop offset="1" stop-color="#2a3a9a"/></radialGradient>
<path id="dd" d="M0 0 H3.6 L1.8 2Z" fill="#555"/>
</defs>
<!-- app egg -->
<ellipse cx="9.4" cy="7.1" rx="4.9" ry="5.8" fill="url(#eg)"/>
<ellipse cx="9.5" cy="7.9" rx="2.4" ry="3" fill="#7ed01c"/>
<rect x="23.3" y="4" width="0.9" height="6" fill="#dedede"/>
<!-- new doc -->
<path d="M36.4 -1 H42.3 L45 1.8 V11.4 H36.4Z" fill="#fff" stroke="#d4d4d4" stroke-width="0.8"/>
<path d="M42.3 -1 V1.8 H45" fill="none" stroke="#d4d4d4" stroke-width="0.8"/>
<!-- folder -->
<path d="M51.3 -1 H56 L57 0.6 H62.8 V2.5 H51.3Z" fill="#6e6e6e"/>
<rect x="52" y="1.2" width="10.2" height="2" fill="#fafafa"/>
<rect x="51.2" y="2.4" width="11.7" height="9" rx="0.8" fill="#efca5e"/>
<!-- save -->
<path d="M66.9 -1 H78.2 V11.6 H68.4 L66.9 10.2Z" fill="#3f8fcb"/>
<rect x="68.8" y="-1" width="7.4" height="6.6" fill="#efefef"/>
<rect x="69.6" y="8" width="5.8" height="3.6" fill="#e8eef4"/>
<rect x="70.3" y="8.8" width="1.5" height="2.2" fill="#3f8fcb"/>
<!-- xls -->
<path d="M84.3 -1 H91 L93.8 2.4 V11.6 H84.3Z" fill="#6cc26f"/>
<path d="M91 -1 V2.4 H93.8Z" fill="#a8e0aa"/>
<text x="85.6" y="8.6" font-family="Liberation Sans" font-size="4.6" font-weight="bold" fill="#fff" textLength="6.8" lengthAdjust="spacingAndGlyphs">XLS</text>
<!-- gear -->
<rect x="99.2" y="-1" width="10.7" height="12.5" rx="1.6" fill="#e2e2e2"/>
<circle cx="104.6" cy="5.5" r="2.3" fill="none" stroke="#555" stroke-width="1.3"/>
<g stroke="#555" stroke-width="1.3"><path d="M104.6 1.9 V2.9 M104.6 8.1 V9.1 M101 5.5 H102 M107.2 5.5 H108.2 M102.05 2.95 L102.75 3.65 M106.45 7.35 L107.15 8.05 M102.05 8.05 L102.75 7.35 M106.45 3.65 L107.15 2.95"/></g>
<!-- red bars -->
<g stroke="#f02a2a" stroke-width="1.5"><path d="M116.7 11.6 V5.8 M119 11.6 V5 M121.2 11.6 V6 M123.4 11.6 V4 M125.6 11.6 V2"/></g>
<!-- hexes -->
<path d="M133.8 0.2 L136.7 1.85 V5.15 L133.8 6.8 L130.9 5.15 V1.85Z" fill="#ee2b2b"/>
<path d="M139.6 1.4 L142.4 3 V6.1 L139.6 7.7 L136.8 6.1 V3Z" fill="#1fb0f0"/>
<path d="M135.5 5.9 L138.3 7.5 V10.7 L135.5 12.3 L132.7 10.7 V7.5Z" fill="#ffc62b"/>
<!-- SERP -->
<rect x="147.4" y="-1" width="10.9" height="12.6" fill="#ececec"/>
<text x="148.6" y="5.4" font-family="Liberation Sans" font-size="6.6" font-weight="bold" fill="#222" textLength="8.2" lengthAdjust="spacingAndGlyphs">SE</text>
<text x="149.6" y="11.2" font-family="Liberation Sans" font-size="6.6" font-weight="bold" fill="#222" textLength="8.2" lengthAdjust="spacingAndGlyphs">RP</text>
<use href="#dd" x="161.5" y="4.6"/>
<!-- D -->
<path d="M172.2 -1 H177.6 L182.5 5.4 L177.8 11.6 H172.2 Q170.9 11.6 170.9 10.3 V-1Z" fill="#8b72bd"/>
<path d="M170.9 5.4 H182.5 L177.8 11.6 H172.2 Q170.9 11.6 170.9 10.3Z" fill="#7559a8" opacity="0.55"/>
<path d="M172.65 10.60 V8.11 H179.15 V10.60 M178.24 8.11 V2.05 H174.34 Q174.34 6.46 173.25 8.11" fill="none" stroke="#fff" stroke-width="1.30" stroke-linejoin="miter"/>
<use href="#dd" x="187.3" y="4.6"/>
<!-- G -->
<rect x="196.2" y="-1" width="11.9" height="12.8" fill="#fbfcff"/>
<rect x="196.2" y="-1" width="0.9" height="12.8" fill="#5b8def"/>
<rect x="207.2" y="-1" width="0.9" height="12.8" fill="#e0584c"/>
<rect x="196.2" y="11" width="11.9" height="0.9" fill="#4caf50"/>
<rect x="196.2" y="0" width="11.9" height="0.8" fill="#4caf50"/>
<text x="197.6" y="9.8" font-family="Liberation Serif" font-size="12.6" fill="#3345bb" stroke="#3345bb" stroke-width="0.25" textLength="8.8" lengthAdjust="spacingAndGlyphs">G</text>
<use href="#dd" x="212.4" y="4.6"/>
<!-- red X -->
<path d="M222.6 -0.6 L231.8 9.8 M231.8 -0.6 L222.6 9.8" stroke="#e82828" stroke-width="2.3"/>
<rect x="228.5" y="6.9" width="4.2" height="4.4" fill="#fff" stroke="#555" stroke-width="0.9"/>
<path d="M229.6 9 L230.4 9.9 L231.7 8.3" fill="none" stroke="#444" stroke-width="0.7"/>
<!-- link -->
<g fill="none" stroke-width="1.9" stroke-linecap="round">
<path d="M243.6 3.2 L245 1.8 A2 2 0 0 1 247.9 4.7 L246.2 6.4" stroke="#ff6a8c"/>
<path d="M243.6 8.8 L242.2 10.2 A2 2 0 0 1 239.3 7.3 L241 5.6" stroke="#6dc1ee"/>
</g>
<g stroke="#cfcfcf" stroke-width="0.7"><path d="M240.6 0.4 L241.4 2.6 M238.2 2.8 L240.2 3.6 M246.4 11.4 L245.8 9.4 M248.8 9 L246.8 8.2"/></g>
<!-- structure -->
<rect x="254.2" y="-1" width="7.9" height="3.9" fill="#ecc95e"/>
<path d="M256.8 2.9 V8.4 M256.8 5.7 H258.4" stroke="#c8c8c8" stroke-width="0.8" fill="none"/>
<rect x="258.4" y="4.2" width="6.6" height="3" rx="0.4" fill="#ee3377"/>
<rect x="254.2" y="8.4" width="7.9" height="3.2" fill="#5bb5d0"/>
<!-- minus circle -->
<circle cx="275.5" cy="5.7" r="5.8" fill="#c9c9c9"/>
<rect x="272" y="4.9" width="7" height="1.6" fill="#fff"/>
<use href="#dd" x="284.1" y="4.6"/>
<!-- shield -->
<path d="M293.9 -1 H304.5 V5.4 Q304.5 8.6 299.2 11.7 Q293.9 8.6 293.9 5.4Z" fill="#7ba7e6"/>
<path d="M297.2 5.2 L298.7 6.7 L301.6 3.6" fill="none" stroke="#fff" stroke-width="1.3"/>
<!-- archive -->
<rect x="311.2" y="-1" width="8.8" height="3.2" fill="#ffe08a"/>
<rect x="310.6" y="1.8" width="10" height="3" fill="#ffd466"/>
<rect x="309.8" y="4.4" width="11.6" height="7.2" rx="0.7" fill="#1fb0dc"/>
<path d="M313.4 7.6 Q313.4 9 314.6 9 H316.6 Q317.8 9 317.8 7.6" fill="none" stroke="#e8fbff" stroke-width="0.9"/>
<use href="#dd" x="324.4" y="4.6"/>
<!-- magnifier -->
<circle cx="337.9" cy="3.9" r="3.8" fill="none" stroke="#444" stroke-width="1.3"/>
<path d="M340.8 7 L344.8 11.4" stroke="#e8207a" stroke-width="1.5"/>
<use href="#dd" x="348.2" y="4.6"/>
<!-- green plus -->
<circle cx="363.2" cy="5.7" r="6" fill="#5cc25f"/>
<path d="M363.2 2.5 V8.9 M360 5.7 H366.4" stroke="#fff" stroke-width="1.9"/>
<!-- red up -->
<circle cx="379.5" cy="5.6" r="5.8" fill="#ee5a55"/>
<path d="M379.5 1.9 L383.6 5.1 H380.7 V9.3 H378.3 V5.1 H375.4Z" fill="#fff"/>
<path d="M377.4 6.7 H381.6 M377.4 8.1 H381.6" stroke="#ee5a55" stroke-width="0.5"/>
<use href="#dd" x="388.3" y="4.8"/>
<!-- M -->
<path d="M397.5 -1 H409.2 V10.6 Q409.2 11.9 407.9 11.9 H398.8 Q397.5 11.9 397.5 10.6Z" fill="#3cb54a"/>
<path d="M399.6 9.6 V1.4 L403.35 7.4 L407.1 1.4 V9.6" fill="none" stroke="#fff" stroke-width="1.3" stroke-linejoin="miter"/>
<use href="#dd" x="412" y="4.8"/>
<!-- customize -->
<rect x="424" y="4.2" width="4.6" height="0.9" fill="#333"/>
<path d="M424 6.1 H428.6 L426.3 8.6Z" fill="#333"/>
<rect x="435.9" y="4.4" width="0.9" height="6" fill="#d8d8d8"/>
</svg>

</body></html>
